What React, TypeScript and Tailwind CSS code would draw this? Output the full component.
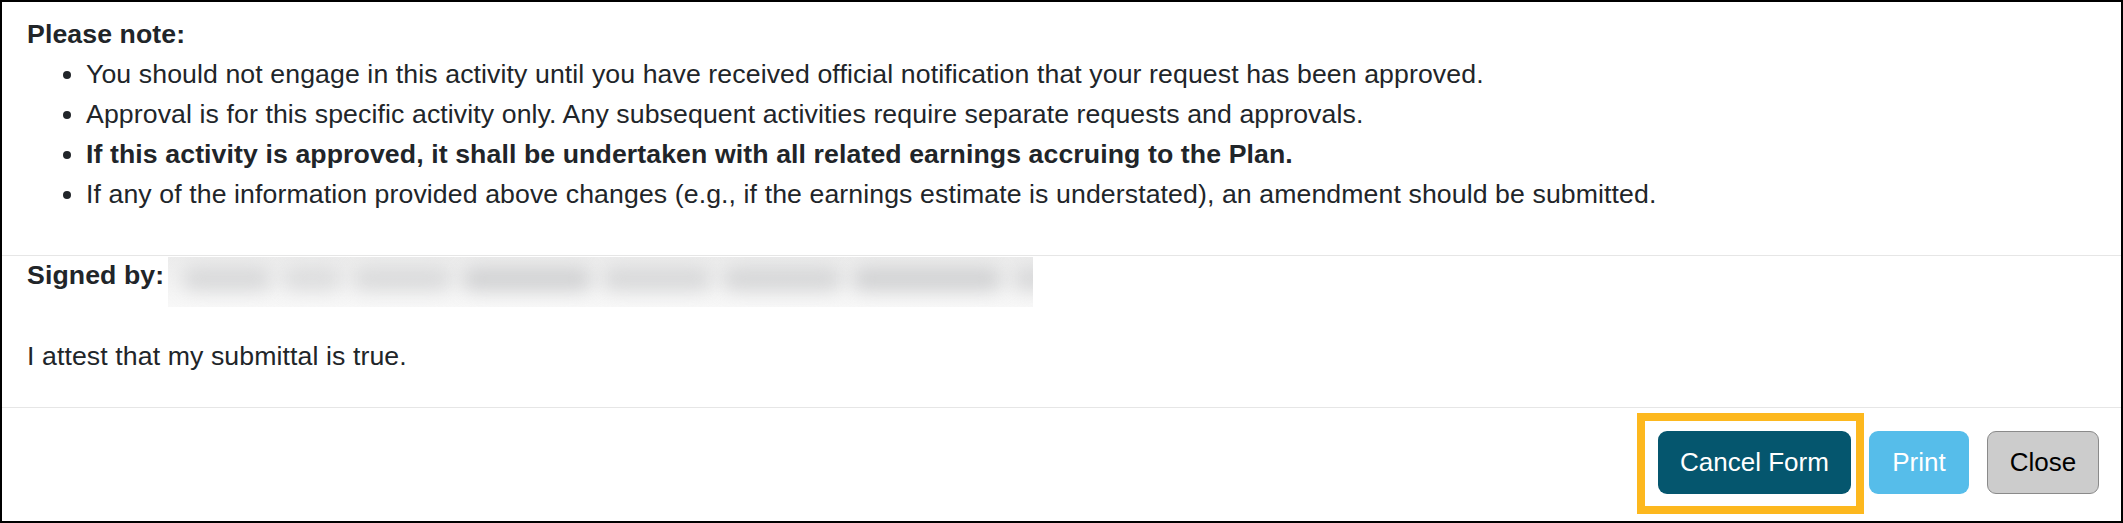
import React from 'react';

const notes = [
  { text: 'You should not engage in this activity until you have received official notification that your request has been approved.', bold: false },
  { text: 'Approval is for this specific activity only. Any subsequent activities require separate requests and approvals.', bold: false },
  { text: 'If this activity is approved, it shall be undertaken with all related earnings accruing to the Plan.', bold: true },
  { text: 'If any of the information provided above changes (e.g., if the earnings estimate is understated), an amendment should be submitted.', bold: false },
];

// redacted signature: soft grey smudges instead of a name
const smudges = [
  { w: 90, o: 0.55 },
  { w: 60, o: 0.45 },
  { w: 100, o: 0.5 },
  { w: 130, o: 0.7 },
  { w: 110, o: 0.55 },
  { w: 120, o: 0.6 },
  { w: 150, o: 0.7 },
  { w: 95, o: 0.55 },
];

function RedactedName() {
  return (
    <div className="ml-[4px] mt-[1px] flex h-[50px] w-[865px] items-start gap-[10px] overflow-hidden bg-gradient-to-b from-[#ececec] to-[#f8f8f8] px-[14px] pt-[10px]">
      {smudges.map((s, i) => (
        <div
          key={i}
          className="h-[24px] shrink-0 rounded-full bg-[#c4c5c7] blur-[9px]"
          style={{ width: s.w, opacity: s.o }}
        />
      ))}
    </div>
  );
}

export default function App() {
  return (
    <div
      className="flex h-[523px] w-[2123px] flex-col border-2 border-black bg-white text-[26.67px] tracking-[0.1px] text-[#212529]"
      style={{ fontFamily: '"Liberation Sans", Arial, sans-serif' }}
    >
      <div className="px-[25px] pb-[41px] pt-[12px] leading-[40px]">
        <div className="font-bold">Please note:</div>
        <ul className="list-disc pl-[59px]">
          {notes.map((n, i) => (
            <li key={i} className={n.bold ? 'font-bold' : ''}>
              {n.text}
            </li>
          ))}
        </ul>
      </div>

      <div className="border-t border-[#e6e6e6] px-[25px] pb-[31px]">
        <div className="flex items-start">
          <span className="font-bold leading-[38px]">Signed by:</span>
          <RedactedName />
        </div>
        <div className="mt-[30px] leading-[39px]">I attest that my submittal is true.</div>
      </div>

      <div className="flex flex-1 items-start justify-end gap-[18px] border-t border-[#e6e6e6] pr-[22px] pt-[23px] text-[26px] tracking-normal">
        <span className="relative flex">
          <button className="h-[63px] w-[193px] rounded-[9px] bg-[#05566e] text-white">
            Cancel Form
          </button>
          <span className="pointer-events-none absolute -bottom-[20px] -left-[21px] -right-[13px] -top-[18px] border-[8px] border-[#fdb81e]" />
        </span>
        <button className="h-[63px] w-[100px] rounded-[9px] bg-[#56bdea] text-white">
          Print
        </button>
        <button className="h-[63px] w-[112px] rounded-[9px] border border-[#8a8a8a] bg-[#cccccc] text-black">
          Close
        </button>
      </div>
    </div>
  );
}
